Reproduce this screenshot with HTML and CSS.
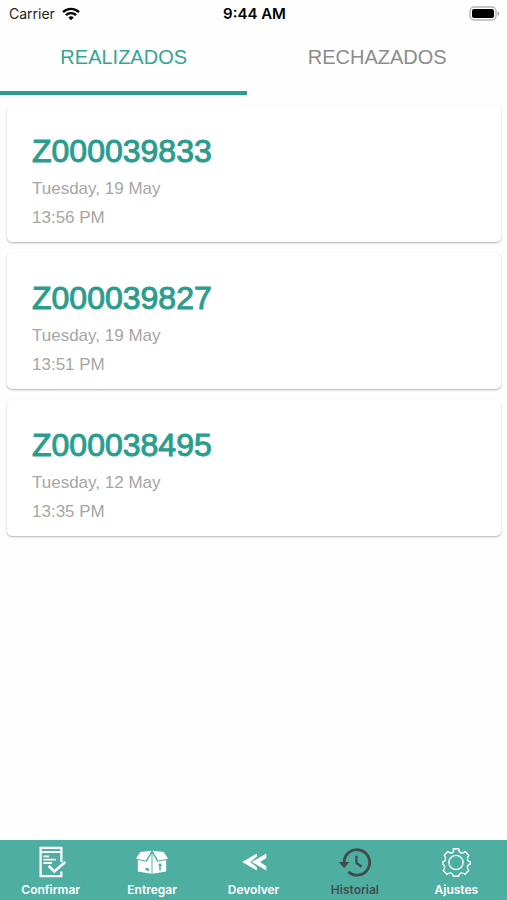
FILE: index.html
```html
<!DOCTYPE html>
<html lang="es">
<head>
    <meta charset="UTF-8">
    <meta name="viewport" content="width=device-width, initial-scale=1.0">
    <title>Historial</title>
    <link rel="stylesheet" href="styles.css">
</head>
<body>
    <header class="status-bar">
        <div class="carrier">
            <span>Carrier</span>
            <svg class="wifi" width="18" height="14" viewBox="0 0 18 14" fill="none" stroke="#000" stroke-width="2.4">
                <path d="M1 5.1a11.5 11.5 0 0 1 16 0"/>
                <path d="M3.9 8.2a7.4 7.4 0 0 1 10.2 0"/>
                <path d="M6.3 10.5a4 4 0 0 1 5.4 0L9 13.3z" fill="#000" stroke="none"/>
            </svg>
        </div>
        <span class="clock">9:44 AM</span>
        <svg class="battery" width="31" height="15" viewBox="0 0 31 15">
            <rect x="1" y="1" width="26" height="13" rx="4" fill="#fff" stroke="#b5b5b5" stroke-width="1.4"/>
            <rect x="3" y="3" width="22" height="9" rx="2" fill="#000"/>
            <path d="M28.5 5.2c2.4.8 2.4 3.8 0 4.6z" fill="#a5a5a5"/>
        </svg>
    </header>

    <nav class="tabs">
        <a href="#realizados" class="tab tab-active">REALIZADOS</a>
        <a href="#rechazados" class="tab">RECHAZADOS</a>
    </nav>

    <main class="orders" id="realizados">
        <article class="order-card">
            <h2 class="order-code">Z000039833</h2>
            <p class="order-info">Tuesday, 19 May</p>
            <p class="order-info">13:56 PM</p>
        </article>
        <article class="order-card">
            <h2 class="order-code">Z000039827</h2>
            <p class="order-info">Tuesday, 19 May</p>
            <p class="order-info">13:51 PM</p>
        </article>
        <article class="order-card">
            <h2 class="order-code">Z000038495</h2>
            <p class="order-info">Tuesday, 12 May</p>
            <p class="order-info">13:35 PM</p>
        </article>
    </main>

    <nav class="bottom-nav">
        <a href="#confirmar" class="nav-item">
            <svg width="36" height="36" viewBox="0 0 36 36" fill="none" stroke="currentColor" stroke-width="2.4">
                <path d="M29 18V3H7v30h22v-5"/>
                <path d="M7 7.5h22" stroke-width="2"/>
                <path d="M10 12h6M10 15.500h13M10 19h9" stroke-width="2"/>
                <path d="M15.5 22l6 6L33 18" stroke-width="2.8"/>
            </svg>
            <span>Confirmar</span>
        </a>
        <a href="#entregar" class="nav-item">
            <svg width="36" height="36" viewBox="0 0 36 36" fill="currentColor">
                <path d="M5.5 7.5L17.5 6l-6 10.5L1 14.5z"/>
                <path d="M30.5 7.5L18.5 6l6 10.5L35 14.5z"/>
                <path d="M3 16l9.500 1.800L17.500 9v21.500L3 28z"/>
                <path d="M33 16l-9.500 1.800L18.500 9v21.500L33 28z"/>
                <path d="M11 24.200l4 .6v2.600l-4-.6z" fill="#4eaea1"/>
                <path d="M26.500 19l2.500 3h-1.700v5h-1.600v-5H24z" fill="#4eaea1"/>
            </svg>
            <span>Entregar</span>
        </a>
        <a href="#devolver" class="nav-item">
            <svg width="36" height="36" viewBox="0 0 36 36" fill="currentColor">
                <path d="M21 9v3.400L14 18l7 5.500V27L5.500 18z"/>
                <path d="M31 9v4.800L24.500 18l6.500 4.500V27L15.500 18z"/>
            </svg>
            <span>Devolver</span>
        </a>
        <a href="#historial" class="nav-item nav-item-active">
            <svg width="36" height="36" viewBox="0 0 36 36" fill="none" stroke="currentColor" stroke-width="3">
                <path d="M6.500 18.500A13.500 13.500 0 1 1 11 28.500"/>
                <path d="M1 18h11l-5.500 6.500z" fill="currentColor" stroke="none"/>
                <path d="M19.500 11.500V19l5.500 4" stroke-width="2.400"/>
            </svg>
            <span>Historial</span>
        </a>
        <a href="#ajustes" class="nav-item">
            <svg width="36" height="36" viewBox="0 0 36 36" fill="none" stroke="currentColor" stroke-width="1.500" stroke-linejoin="round">
                <path d="M15.200 4.500h5.600q.2 3.500 2.200 4.300t4.600-1.300l3.900 3.900q-2.100 2.600-1.300 4.600t2.800 2.200v2.600q-2 .2-2.800 2.200t1.300 4.600l-3.900 3.900q-2.600-2.100-4.600-1.300t-2.200 3.300h-5.600q-.2-2.500-2.200-3.300t-4.600 1.300l-3.900-3.900q2.100-2.600 1.300-4.600T4 20.800v-2.600q2-.2 2.800-2.200t-1.300-4.600l3.900-3.900q2.600 2.100 4.600 1.300t1.200-4.300z" transform="translate(0 -.5)"/>
                <circle cx="18" cy="18.500" r="7.500"/>
            </svg>
            <span>Ajustes</span>
        </a>
    </nav>
</body>
</html>
```

FILE: styles.css
```css
* {
    margin: 0;
    padding: 0;
    box-sizing: border-box;
}

body {
    display: flex;
    flex-direction: column;
    min-height: 100vh;
    background: #fefefe;
    font-family: "Liberation Sans", Arial, sans-serif;
}

a {
    text-decoration: none;
}

.status-bar {
    display: grid;
    grid-template-columns: 1fr auto 1fr;
    align-items: center;
    height: 27px;
    padding: 0 7px 0 9px;
    font-family: Inter, sans-serif;
    font-size: 14px;
    color: #222;
}

.carrier {
    display: flex;
    align-items: center;
    gap: 7px;
}

.clock {
    font-size: 15px;
    font-weight: 600;
    color: #000;
}

.battery {
    justify-self: end;
}

.tabs {
    display: flex;
}

.tab {
    flex: auto;
    height: 68px;
    padding-top: 18px;
    border-bottom: 4px solid transparent;
    font-size: 20px;
    line-height: 24px;
    text-align: center;
    color: #8c8c8c;
}

.tab-active {
    color: #35a594;
    border-bottom-color: #2c9d8f;
}

.orders {
    flex: 1;
    display: flex;
    flex-direction: column;
    gap: 11px;
    padding: 11px 6px 11px 7px;
}

.order-card {
    padding: 26px 25px 10px;
    background: #fff;
    border-radius: 5px;
    box-shadow: 0 1px 2px rgba(0, 0, 0, 0.3);
}

.order-code {
    margin-bottom: 4px;
    font-size: 32px;
    font-weight: normal;
    line-height: 38px;
    color: #2a9d8f;
    -webkit-text-stroke: 1px #2a9d8f;
}

.order-info {
    font-size: 17px;
    line-height: 29px;
    color: #a6a6a6;
}

.bottom-nav {
    display: flex;
    height: 60px;
    background: #4eaea1;
}

.nav-item {
    flex: 1;
    display: flex;
    flex-direction: column;
    align-items: center;
    padding-top: 5px;
    font-family: Inter, sans-serif;
    font-size: 12px;
    font-weight: 600;
    line-height: 21px;
    color: #fff;
}

.nav-item-active {
    color: #444c4b;
}
```
